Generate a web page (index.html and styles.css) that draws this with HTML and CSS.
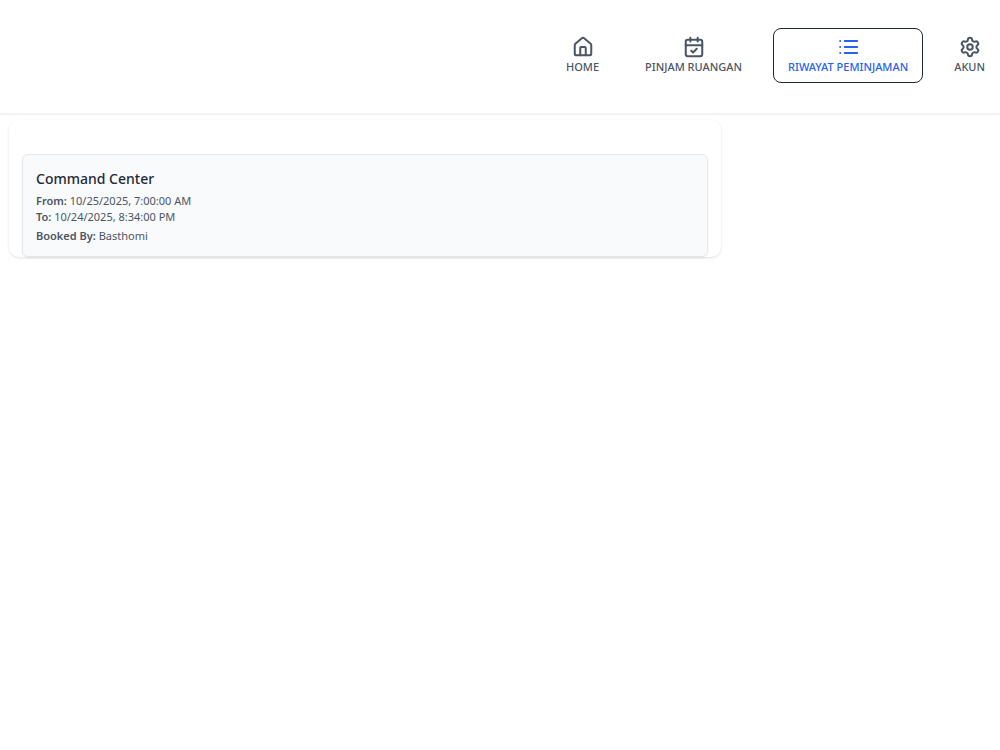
FILE: index.html
```html
<!DOCTYPE html>
<html lang="id">
<head>
    <meta charset="UTF-8">
    <meta name="viewport" content="width=device-width, initial-scale=1.0">
    <title>Riwayat Peminjaman</title>
    <link rel="stylesheet" href="styles.css">
</head>
<body>
    <header class="navbar">
        <nav class="nav-links">
            <a href="#" class="nav-link">
                <svg class="nav-icon" viewBox="0 0 24 24" aria-hidden="true">
                    <path d="M15 21v-8a1 1 0 0 0-1-1h-4a1 1 0 0 0-1 1v8"/>
                    <path d="M3 10a2 2 0 0 1 .709-1.528l7-6a2 2 0 0 1 2.582 0l7 6A2 2 0 0 1 21 10v9a2 2 0 0 1-2 2H5a2 2 0 0 1-2-2z"/>
                </svg>
                <span>HOME</span>
            </a>
            <a href="#" class="nav-link">
                <svg class="nav-icon" viewBox="0 0 24 24" aria-hidden="true">
                    <path d="M8 2v4M16 2v4M3 10h18"/>
                    <rect x="3" y="4" width="18" height="18" rx="2"/>
                    <path d="m9 16 2 2 4-4"/>
                </svg>
                <span>PINJAM RUANGAN</span>
            </a>
            <a href="#" class="nav-link active" aria-current="page">
                <svg class="nav-icon" viewBox="0 0 24 24" aria-hidden="true">
                    <path d="M3.5 5.5h.01M3.5 12h.01M3.5 18.5h.01M8.5 5.5H22M8.5 12H22M8.5 18.5H22"/>
                </svg>
                <span>RIWAYAT PEMINJAMAN</span>
            </a>
            <a href="#" class="nav-link">
                <svg class="nav-icon" viewBox="0 0 24 24" aria-hidden="true">
                    <path d="M9.671 4.136a2.34 2.34 0 0 1 4.659 0 2.34 2.34 0 0 0 3.319 1.915 2.34 2.34 0 0 1 2.33 4.033 2.34 2.34 0 0 0 0 3.831 2.34 2.34 0 0 1-2.33 4.033 2.34 2.34 0 0 0-3.319 1.915 2.34 2.34 0 0 1-4.659 0 2.34 2.34 0 0 0-3.32-1.915 2.34 2.34 0 0 1-2.33-4.033 2.34 2.34 0 0 0 0-3.831A2.34 2.34 0 0 1 6.35 6.051a2.34 2.34 0 0 0 3.319-1.915"/>
                    <circle cx="12" cy="12" r="3"/>
                </svg>
                <span>AKUN</span>
            </a>
        </nav>
    </header>

    <main class="history">
        <article class="booking">
            <h2>Command Center</h2>
            <p><strong>From:</strong> 10/25/2025, 7:00:00 AM</p>
            <p><strong>To:</strong> 10/24/2025, 8:34:00 PM</p>
            <p class="booked-by"><strong>Booked By:</strong> Basthomi</p>
        </article>
    </main>
</body>
</html>
```

FILE: styles.css
```css
* {
    box-sizing: border-box;
}
body {
    margin: 0;
    background-color: #fff;
    color: #4b5563;
    font-family: "Segoe UI", "Noto Sans", "Open Sans", sans-serif;
    font-size: 11px;
    line-height: 16px;
}
.navbar {
    display: flex;
    justify-content: flex-end;
    padding: 28px 0 30px;
    border-bottom: 1px solid #f0f0f1;
    box-shadow: 0 1px 2px rgba(0, 0, 0, 0.06);
}
.nav-links {
    display: flex;
    gap: 16px;
}
.nav-link {
    display: flex;
    flex-direction: column;
    align-items: center;
    gap: 1px;
    padding: 7px 14px;
    border: 1px solid transparent;
    border-radius: 8px;
    color: #4b5563;
    font-weight: 500;
    text-decoration: none;
    white-space: nowrap;
}
.nav-link.active {
    border-color: #1f2937;
    color: #2563eb;
}
.nav-icon {
    width: 22px;
    height: 22px;
    fill: none;
    stroke: currentColor;
    stroke-width: 2.2;
    stroke-linecap: round;
    stroke-linejoin: round;
}
.history {
    width: 71.2%;
    margin: 6px 9px;
    padding: 34px 13px 0;
    border-radius: 10px;
    box-shadow: 0 1px 3px rgba(0, 0, 0, 0.12);
}
.booking {
    padding: 13px 13px 12px;
    border: 1px solid #e5e7eb;
    border-radius: 6px;
    background-color: #f9fafb;
    box-shadow: 0 1px 2px rgba(0, 0, 0, 0.05);
}
.booking h2 {
    margin: 0 0 4px;
    color: #1f2937;
    font-size: 14px;
    font-weight: 500;
    line-height: 21px;
}
.booking p {
    margin: 0;
}
.booking strong {
    font-weight: 600;
}
.booking .booked-by {
    margin-top: 3px;
}
```
